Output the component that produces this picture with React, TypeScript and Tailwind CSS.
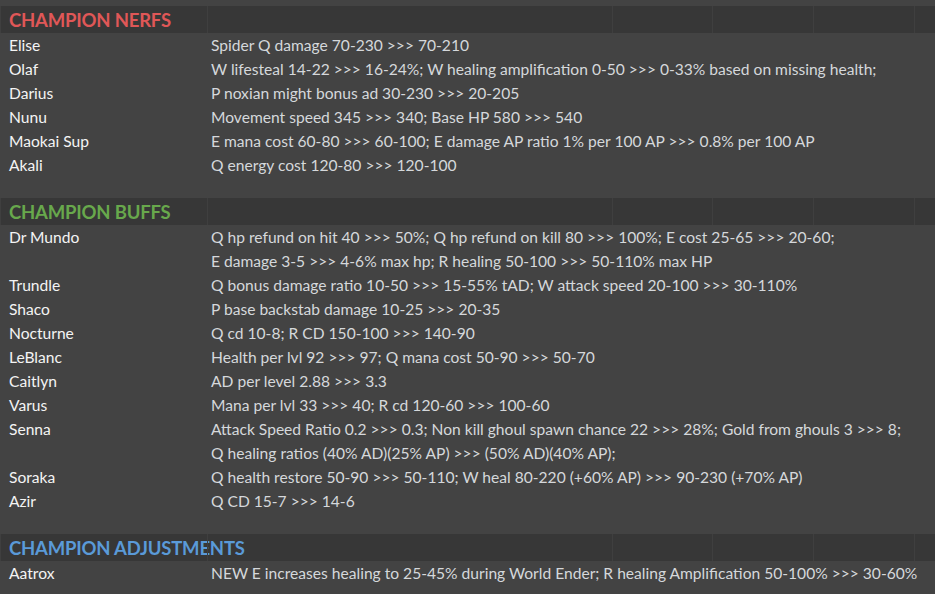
import React from 'react';

type Row = { name: string; lines: string[] };

const nerfs: Row[] = [
    { name: 'Elise', lines: ['Spider Q damage 70-230 >>> 70-210'] },
    { name: 'Olaf', lines: ['W lifesteal 14-22 >>> 16-24%; W healing amplification 0-50 >>> 0-33% based on missing health;'] },
    { name: 'Darius', lines: ['P noxian might bonus ad 30-230 >>> 20-205'] },
    { name: 'Nunu', lines: ['Movement speed 345 >>> 340; Base HP 580 >>> 540'] },
    { name: 'Maokai Sup', lines: ['E mana cost 60-80 >>> 60-100; E damage AP ratio 1% per 100 AP >>> 0.8% per 100 AP'] },
    { name: 'Akali', lines: ['Q energy cost 120-80 >>> 120-100'] },
];

const buffs: Row[] = [
    {
        name: 'Dr Mundo',
        lines: [
            'Q hp refund on hit 40 >>> 50%; Q hp refund on kill 80 >>> 100%; E cost 25-65 >>> 20-60;',
            'E damage 3-5 >>> 4-6% max hp; R healing 50-100 >>> 50-110% max HP',
        ],
    },
    { name: 'Trundle', lines: ['Q bonus damage ratio 10-50 >>> 15-55% tAD; W attack speed 20-100 >>> 30-110%'] },
    { name: 'Shaco', lines: ['P base backstab damage 10-25 >>> 20-35'] },
    { name: 'Nocturne', lines: ['Q cd 10-8; R CD 150-100 >>> 140-90'] },
    { name: 'LeBlanc', lines: ['Health per lvl 92 >>> 97; Q mana cost 50-90 >>> 50-70'] },
    { name: 'Caitlyn', lines: ['AD per level 2.88 >>> 3.3'] },
    { name: 'Varus', lines: ['Mana per lvl 33 >>> 40; R cd 120-60 >>> 100-60'] },
    {
        name: 'Senna',
        lines: [
            'Attack Speed Ratio 0.2 >>> 0.3; Non kill ghoul spawn chance 22 >>> 28%; Gold from ghouls 3 >>> 8;',
            'Q healing ratios (40% AD)(25% AP) >>> (50% AD)(40% AP);',
        ],
    },
    { name: 'Soraka', lines: ['Q health restore 50-90 >>> 50-110; W heal 80-220 (+60% AP) >>> 90-230 (+70% AP)'] },
    { name: 'Azir', lines: ['Q CD 15-7 >>> 14-6'] },
];

const adjustments: Row[] = [
    { name: 'Aatrox', lines: ['NEW E increases healing to 25-45% during World Ender; R healing Amplification 50-100% >>> 30-60%'] },
];

const SectionHeader = ({ title, color }: { title: string; color: string }) => (
    <div className="flex h-[27px] bg-[#373737]">
        <div className="w-[207px] border-l border-[#3f3f3f] pl-[8px] pt-[2px] flex items-center whitespace-nowrap">
            <span className={`text-[18.5px] font-bold tracking-[-0.2px] ${color}`}>{title}</span>
        </div>
        <div className="w-[405px] border-l border-[#3f3f3f]" />
        <div className="w-[100px] border-l border-[#3f3f3f]" />
        <div className="w-[101px] border-l border-[#3f3f3f]" />
        <div className="w-[101px] border-l border-[#3f3f3f]" />
        <div className="flex-1 border-l border-[#3f3f3f]" />
    </div>
);

const Section = ({ title, color, rows }: { title: string; color: string; rows: Row[] }) => (
    <section>
        <SectionHeader title={title} color={color} />
        {rows.map(r => (
            <div key={r.name} className="flex text-[15.6px] leading-[24px]">
                <div className="w-[207px] pl-[9px] text-[#f4f4f4]">{r.name}</div>
                <div className="flex-1 pl-[4px] text-[#d5d8db] whitespace-nowrap">
                    {r.lines.map((l, i) => <div key={i}>{l}</div>)}
                </div>
            </div>
        ))}
    </section>
);

export default function App() {
    return (
        <div className="w-[935px] h-[594px] overflow-hidden bg-[#434343] pt-[6px] flex flex-col gap-[21px]" style={{ fontFamily: 'Lato, "Liberation Sans", sans-serif' }}>
            <Section title="CHAMPION NERFS" color="text-[#e05757]" rows={nerfs} />
            <Section title="CHAMPION BUFFS" color="text-[#68a84c]" rows={buffs} />
            <Section title="CHAMPION ADJUSTMENTS" color="text-[#5a9ad8]" rows={adjustments} />
        </div>
    );
}
